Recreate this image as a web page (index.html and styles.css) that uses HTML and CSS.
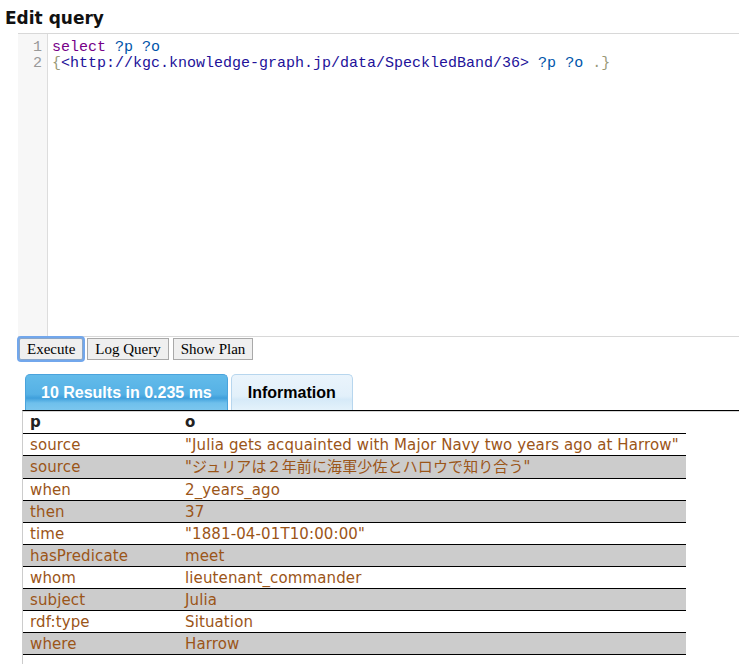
FILE: index.html
```html
<!DOCTYPE html>
<html lang="en">
<head>
<meta charset="utf-8">
<title>Edit query</title>
<link rel="stylesheet" href="styles.css">
</head>
<body>
<h1 class="title">Edit query</h1>
<div class="editor">
  <div class="gutter">
    <div class="ln">1</div>
    <div class="ln">2</div>
  </div>
  <div class="code">
    <div class="line"><span class="kw">select</span> <span class="var">?p</span> <span class="var">?o</span></div>
    <div class="line"><span class="br">{</span><span class="iri">&lt;http://kgc.knowledge-graph.jp/data/SpeckledBand/36&gt;</span> <span class="var">?p</span> <span class="var">?o</span> <span class="br">.}</span></div>
  </div>
</div>
<div class="buttons">
  <button class="btn focused">Execute</button>
  <button class="btn">Log Query</button>
  <button class="btn">Show Plan</button>
</div>
<div class="tabs">
  <ul class="tab-list">
    <li class="tab active">10 Results in 0.235 ms</li>
    <li class="tab">Information</li>
  </ul>
  <div class="panel">
    <table class="results">
      <thead>
        <tr><th class="col-p">p</th><th>o</th></tr>
      </thead>
      <tbody>
        <tr><td>source</td><td>"Julia gets acquainted with Major Navy two years ago at Harrow"</td></tr>
        <tr class="ja"><td>source</td><td>"ジュリアは２年前に海軍少佐とハロウで知り合う"</td></tr>
        <tr><td>when</td><td>2_years_ago</td></tr>
        <tr><td>then</td><td>37</td></tr>
        <tr><td>time</td><td>"1881-04-01T10:00:00"</td></tr>
        <tr><td>hasPredicate</td><td>meet</td></tr>
        <tr><td>whom</td><td>lieutenant_commander</td></tr>
        <tr><td>subject</td><td>Julia</td></tr>
        <tr><td>rdf:type</td><td>Situation</td></tr>
        <tr><td>where</td><td>Harrow</td></tr>
      </tbody>
    </table>
  </div>
</div>
</body>
</html>
```
FILE: styles.css
```css
html, body {
  margin: 0;
  padding: 0;
  background: #fff;
}

body {
  font-family: "DejaVu Sans", "Noto Sans CJK JP", sans-serif;
  color: #000;
}

.title {
  margin: 0;
  padding: 8px 0 0 5px;
  font-family: "DejaVu Sans", sans-serif;
  font-weight: bold;
  font-size: 17px;
  line-height: 20px;
  color: #111;
}

.editor {
  display: flex;
  margin: 5px 0 0 18px;
  height: 304px;
  box-sizing: border-box;
  border-top: 1px solid #d8d8d8;
  border-bottom: 1px solid #d8d8d8;
}

.gutter {
  width: 29px;
  background: #f7f7f7;
  border-right: 1px solid #dddddd;
  padding-top: 6px;
  box-sizing: content-box;
}

.ln {
  font-family: "Liberation Mono", monospace;
  font-size: 15px;
  line-height: 16px;
  color: #999;
  text-align: right;
  padding-right: 5px;
}

.code {
  flex: 1;
  padding: 6px 0 0 4px;
  font-family: "Liberation Mono", monospace;
  font-size: 15px;
  line-height: 16px;
}

.line {
  white-space: pre;
}

.kw { color: #770088; }
.var { color: #0055aa; }
.iri { color: #221199; }
.br { color: #999977; }

.buttons {
  display: flex;
  gap: 4px;
  margin: 1px 0 0 19px;
}

.btn {
  height: 22px;
  box-sizing: border-box;
  padding: 0 7px;
  border: 1px solid #a9a9a9;
  background: #efefef;
  font-family: "Liberation Serif", serif;
  font-size: 15px;
  line-height: 20px;
  color: #000;
  border-radius: 0;
}

.btn.focused {
  box-shadow: 0 0 0 2px #72a7ec;
  border-radius: 2px;
  border-color: #8aa6c8;
}

.tabs {
  margin: 14px 0 0 22px;
}

.tab-list {
  display: flex;
  gap: 3px;
  margin: 0;
  padding: 0 0 0 3px;
  list-style: none;
}

.tab {
  height: 36px;
  box-sizing: border-box;
  padding: 0 16px;
  border: 1px solid #b7d6ee;
  border-bottom: none;
  border-radius: 5px 5px 0 0;
  font-family: "Liberation Sans", sans-serif;
  font-weight: bold;
  font-size: 16px;
  line-height: 35px;
  color: #000;
  background: linear-gradient(#eaf4fc 0%, #e2f0fa 60%, #d6eaf8 70%, #e4f2fb 100%);
}

.tab.active {
  padding: 0 15px;
  border-color: #4aa3dc;
  color: #fff;
  background: linear-gradient(#63bbea 0%, #55b1e5 55%, #3f9fdb 66%, #6fc0ec 80%, #7bc6ee 100%);
}

.panel {
  border-top: 1px solid #000;
  border-left: 1px solid #cccccc;
  box-shadow: inset 0 1px 0 #d6d6d6;
  padding-bottom: 20px;
}

.results {
  border-collapse: separate;
  border-spacing: 0;
  font-family: "DejaVu Sans", "Noto Sans CJK JP", sans-serif;
  font-size: 15px;
  letter-spacing: 0.12px;
}

.results th {
  text-align: left;
  font-weight: bold;
  color: #222;
  line-height: 22px;
  padding: 0 7px;
}

.results .col-p {
  width: 141px;
}

.results td {
  border-top: 1px solid #000;
  line-height: 20px;
  padding: 1px 7px 0;
  color: #9b5518;
  white-space: nowrap;
}

.results tbody tr:nth-child(even) td {
  background: #cccccc;
}

.results tbody tr:last-child td {
  border-bottom: 1px solid #000;
}

.results tr.ja td {
  padding-bottom: 1px;
}
```
